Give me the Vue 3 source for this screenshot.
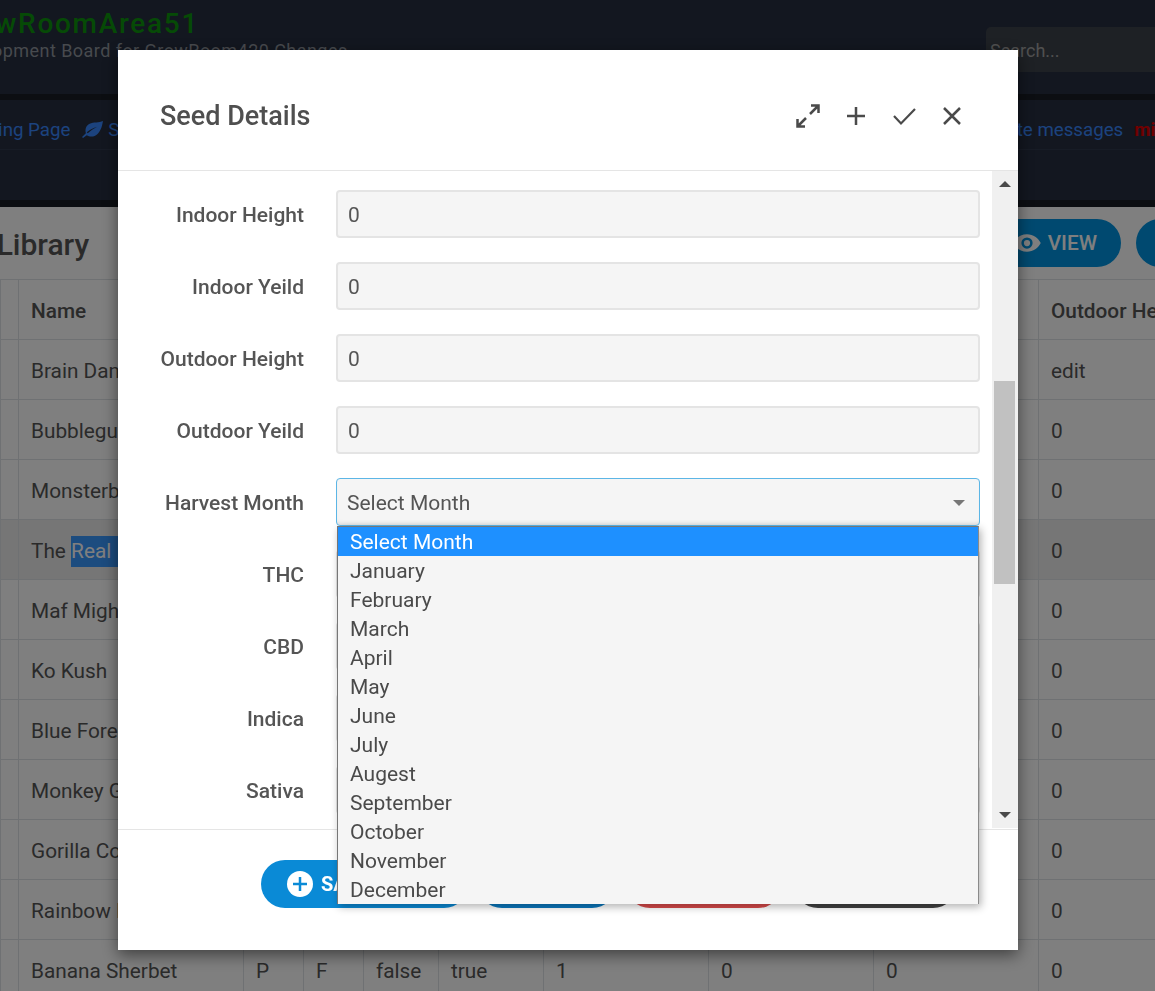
<template>
  <div class="page">
    <header class="topbar">
      <div class="brand">
        <div class="brand-name">GrowRoomArea51</div>
        <div class="brand-sub">Development Board for GrowRoom420 Changes</div>
      </div>
      <div class="search">Search...</div>
    </header>

    <nav class="navbar">
      <div class="nav-row">
        <a class="nav-link landing">Landing Page</a>
        <a class="nav-link">
          <svg class="leaf" viewBox="0 0 24 20">
            <path d="M23 1c-1 7-3 11-6 14-3 3-8 3-11 1l-4 3-1-1 4-4C4 10 5 6 9 4c4-2 10-1 14-3zM7 14c3-3 6-5 10-7-4 1-8 3-11 6z" />
          </svg>
          Seed Library
        </a>
        <span class="nav-spacer"></span>
        <a class="nav-link">Private messages</a>
        <a class="nav-link logout">miguel</a>
      </div>
      <div class="nav-row"></div>
    </nav>

    <section class="content">
      <div class="content-head">
        <h1>Seed Library</h1>
        <div class="head-actions">
          <button class="pill view-pill">
            <svg class="eye" viewBox="0 0 24 24">
              <path d="M12 5C7 5 3 8 1 12c2 4 6 7 11 7s9-3 11-7c-2-4-6-7-11-7zm0 11.500a4.500 4.500 0 1 1 0-9 4.500 4.500 0 0 1 0 9zm0-7a2.500 2.500 0 1 0 0 5 2.500 2.500 0 0 0 0-5z" />
            </svg>
            VIEW
          </button>
          <button class="pill next-pill"></button>
        </div>
      </div>

      <table class="seed-table">
        <colgroup>
          <col class="c-check" />
          <col class="c-name" />
          <col class="c-short" />
          <col class="c-short" />
          <col class="c-bool" />
          <col class="c-mid" />
          <col class="c-num" />
          <col class="c-num" />
          <col class="c-num" />
          <col class="c-last" />
        </colgroup>
        <thead>
          <tr>
            <th></th>
            <th>Name</th>
            <th></th>
            <th></th>
            <th></th>
            <th></th>
            <th></th>
            <th></th>
            <th></th>
            <th>Outdoor Height</th>
          </tr>
        </thead>
        <tbody>
          <tr v-for="(seed, i) in seeds" :key="seed.name" :class="{ hover: i === 3 }">
            <td></td>
            <td v-if="seed.selected">The <span class="selected">Real McCoy</span></td>
            <td v-else>{{ seed.name }}</td>
            <td>P</td>
            <td>F</td>
            <td>false</td>
            <td>true</td>
            <td>1</td>
            <td>0</td>
            <td>0</td>
            <td>{{ seed.last }}</td>
          </tr>
        </tbody>
      </table>
    </section>
  </div>

  <div class="overlay">
    <div class="modal">
      <div class="modal-head">
        <h2>Seed Details</h2>
        <div class="modal-tools">
          <svg viewBox="0 0 24 24" class="tool">
            <path d="M15 1.500h7.500V9M22.500 1.500L14 10M9 22.500H1.500V15M1.500 22.500L10 14" />
          </svg>
          <svg viewBox="0 0 24 24" class="tool">
            <path d="M12 3v18M3 12h18" />
          </svg>
          <svg viewBox="0 0 24 24" class="tool thin">
            <path d="M2 12l7 7.500L23 5" />
          </svg>
          <svg viewBox="0 0 24 24" class="tool">
            <path d="M4 4l16 16M20 4L4 20" />
          </svg>
        </div>
      </div>

      <div class="modal-body">
        <div class="form">
          <div class="form-row" v-for="f in fields" :key="f.label">
            <label>{{ f.label }}</label>
            <div v-if="f.select" class="fake-select">
              <span>Select Month</span>
              <i class="caret"></i>
            </div>
            <input v-else class="field" type="text" value="0" readonly />
          </div>
        </div>
        <div class="scrollbar">
          <i class="arrow up"></i>
          <div class="thumb"></div>
          <i class="arrow down"></i>
        </div>
      </div>

      <div class="modal-foot">
        <button class="btn btn-save">
          <svg class="plus-circle" viewBox="0 0 26 26">
            <circle cx="13" cy="13" r="13" fill="#fff" />
            <path d="M13 6v14M6 13h14" stroke="#0a8ad6" stroke-width="2.500" fill="none" />
          </svg>
          SAVE
        </button>
        <button class="btn btn-blue">EDIT</button>
        <button class="btn btn-red">DELETE</button>
        <button class="btn btn-dark">CLOSE</button>
      </div>

      <ul class="dropdown">
        <li v-for="(m, i) in months" :key="m" :class="{ active: i === 0 }">{{ m }}</li>
      </ul>
    </div>
  </div>
</template>

<script setup>
const seeds = [
  { name: 'Brain Damage', last: 'edit' },
  { name: 'Bubblegum', last: '0' },
  { name: 'Monsterbud', last: '0' },
  { name: 'The Real McCoy', last: '0', selected: true },
  { name: 'Maf Might', last: '0' },
  { name: 'Ko Kush', last: '0' },
  { name: 'Blue Forest', last: '0' },
  { name: 'Monkey Glue', last: '0' },
  { name: 'Gorilla Cookies', last: '0' },
  { name: 'Rainbow Kush', last: '0' },
  { name: 'Banana Sherbet', last: '0' },
]

const fields = [
  { label: 'Indoor Height' },
  { label: 'Indoor Yeild' },
  { label: 'Outdoor Height' },
  { label: 'Outdoor Yeild' },
  { label: 'Harvest Month', select: true },
  { label: 'THC' },
  { label: 'CBD' },
  { label: 'Indica' },
  { label: 'Sativa' },
]

const months = [
  'Select Month',
  'January',
  'February',
  'March',
  'April',
  'May',
  'June',
  'July',
  'Augest',
  'September',
  'October',
  'November',
  'December',
]
</script>

<style>
html,
body {
  margin: 0;
  height: 100%;
  overflow: hidden;
  background: #fff;
}
</style>

<style scoped>
.page {
  width: 1239px;
  font-family: Roboto, 'Liberation Sans', sans-serif;
  color: #555;
  background: #fff;
}

.topbar {
  height: 94px;
  background: #262e40;
  display: flex;
  justify-content: space-between;
  box-sizing: border-box;
  padding-top: 8px;
}

.brand {
  margin-left: -54px;
}

.brand-name {
  font-size: 28px;
  font-weight: 500;
  letter-spacing: 1.7px;
  line-height: 32px;
  color: #0c940c;
}

.brand-sub {
  font-size: 18px;
  line-height: 24px;
  margin-top: -1px;
  letter-spacing: 0.45px;
  color: #8f949c;
}

.search {
  width: 253px;
  height: 45px;
  margin-top: 19px;
  box-sizing: border-box;
  padding: 0 4px;
  line-height: 47px;
  font-size: 18px;
  border-radius: 5px 0 0 5px;
  background: #3c424a;
  color: #a0a0a0;
}

.navbar {
  border-top: 6px solid #181c24;
  border-bottom: 7px solid #181c24;
  background: #262e40;
}

.nav-row {
  height: 50px;
  box-sizing: border-box;
  border-bottom: 1px solid #2f384c;
  display: flex;
  align-items: center;
  padding-top: 10px;
  font-size: 18.700px;
}

.nav-row:last-child {
  border-bottom: 0;
}

.nav-link {
  color: #3887fc;
  display: flex;
  align-items: center;
  gap: 4px;
  white-space: nowrap;
}

.landing {
  margin-left: -43px;
  margin-right: 11px;
}

.leaf {
  width: 23px;
  height: 19px;
  fill: #3887fc;
}

.nav-spacer {
  width: 764px;
}

.logout {
  color: #e00000;
  font-weight: 700;
  margin-left: 11px;
}

.content-head {
  height: 72px;
  display: flex;
  align-items: center;
  justify-content: space-between;
}

h1 {
  margin: 2px 0 0 -78px;
  font-size: 30px;
  font-weight: 500;
  color: #555;
}

.head-actions {
  display: flex;
  gap: 15px;
  margin-top: -1px;
}

.pill {
  height: 48px;
  border: 0;
  border-radius: 24px;
  background: #0093e0;
  color: #fff;
  font: 500 20.800px Roboto, sans-serif;
  display: flex;
  align-items: center;
  gap: 6px;
}

.view-pill {
  width: 140px;
  justify-content: flex-end;
  padding: 0 24px 0 0;
}

.next-pill {
  width: 103px;
  border-radius: 24px 0 0 24px;
}

.eye {
  width: 30px;
  height: 30px;
  fill: #fff;
}

.seed-table {
  width: 1239px;
  table-layout: fixed;
  border-collapse: collapse;
  font-size: 20.800px;
}

.c-check { width: 18px; }
.c-name { width: 225px; }
.c-short { width: 60px; }
.c-bool { width: 75px; }
.c-mid { width: 105px; }
.c-num { width: 165px; }
.c-last { width: 201px; }

th,
td {
  height: 60px;
  padding: 3px 12px 0;
  box-sizing: border-box;
  border: 1px solid #dee2e6;
  text-align: left;
  white-space: nowrap;
  overflow: hidden;
}

th {
  font-weight: 500;
}

tr.hover td {
  background: #ececec;
}

.selected {
  background: #3898ff;
  color: #fff;
  display: inline-block;
  line-height: 31px;
}

.overlay {
  position: fixed;
  inset: 0;
  background: rgba(0, 0, 0, 0.5);
  font-family: Roboto, 'Liberation Sans', sans-serif;
  display: flex;
  justify-content: flex-start;
  align-items: flex-start;
}

.modal {
  position: relative;
  width: 900px;
  height: 900px;
  margin: 50px 0 0 118px;
  background: #fff;
  box-shadow: 0 5px 15px rgba(0, 0, 0, 0.5);
  display: flex;
  flex-direction: column;
  color: #555;
}

.modal-head {
  height: 121px;
  box-sizing: border-box;
  border-bottom: 1px solid #e5e5e5;
  padding: 12px 54px 0 42px;
  display: flex;
  align-items: center;
  justify-content: space-between;
}

h2 {
  margin: 0;
  font-size: 27px;
  font-weight: 500;
  color: #4f4f4f;
}

.modal-tools {
  display: flex;
  gap: 24px;
}

.tool {
  width: 24px;
  height: 24px;
  fill: none;
  stroke: #4a4a4a;
  stroke-width: 2.5;
}

.tool.thin {
  stroke-width: 2.2;
}

.modal-body {
  height: 658px;
  display: flex;
  overflow: hidden;
}

.form {
  flex: 1;
  box-sizing: border-box;
  padding: 19px 12px 0 0;
  display: flex;
  flex-direction: column;
  gap: 24px;
}

.form-row {
  display: grid;
  grid-template-columns: 186px 1fr;
  column-gap: 32px;
  align-items: center;
}

label {
  font-size: 21px;
  font-weight: 500;
  text-align: right;
  color: #555;
  padding-top: 1px;
}

.field,
.fake-select {
  height: 48px;
  width: 100%;
  box-sizing: border-box;
  border: 2px solid #e4e4e4;
  border-radius: 4px;
  background: #f5f5f5;
  padding: 1px 10px 0;
  font: 400 21px Roboto, sans-serif;
  color: #555;
  outline: none;
}

.fake-select {
  border: 1px solid #5cb6e6;
  padding: 1px 10px 0;
  display: flex;
  align-items: center;
  justify-content: space-between;
  box-shadow: inset 0 -4px 5px -3px rgba(0, 0, 0, 0.1);
}

.caret {
  width: 0;
  height: 0;
  border-left: 6px solid transparent;
  border-right: 6px solid transparent;
  border-top: 6px solid #777;
  margin-right: 4px;
}

.scrollbar {
  width: 26px;
  box-sizing: border-box;
  padding-right: 1px;
  background: #f0f0f0;
  display: flex;
  flex-direction: column;
  align-items: center;
  height: 657px;
}

.thumb {
  width: 21px;
  height: 203px;
  margin-top: 194px;
  background: #c1c1c1;
}

.arrow {
  width: 0;
  height: 0;
  border-left: 6px solid transparent;
  border-right: 6px solid transparent;
}

.arrow.up {
  margin-top: 10px;
  border-bottom: 6px solid #4a4a4a;
}

.arrow.down {
  margin-top: auto;
  margin-bottom: 10px;
  border-top: 6px solid #4a4a4a;
}

.modal-foot {
  flex: 1;
  box-sizing: border-box;
  border-top: 1px solid #e5e5e5;
  padding: 30px 0 0 143px;
  display: flex;
  align-items: flex-start;
}

.btn {
  height: 48px;
  border: 0;
  border-radius: 24px;
  color: #fff;
  font: 700 20px Roboto, sans-serif;
  display: flex;
  align-items: center;
  padding: 0 26px;
  gap: 8px;
}

.btn-save {
  width: 207px;
  background: #0a8ad6;
}

.btn-blue {
  width: 138px;
  margin-left: 10px;
  background: #0a78bf;
}

.btn-red {
  width: 156px;
  margin-left: 10px;
  background: #d94a4a;
}

.btn-dark {
  width: 163px;
  margin-left: 12px;
  background: #424242;
}

.plus-circle {
  width: 26px;
  height: 26px;
}

.dropdown {
  position: absolute;
  left: 219px;
  top: 476px;
  width: 642px;
  margin: 0;
  padding: 0;
  box-sizing: border-box;
  list-style: none;
  background: #f5f5f5;
  border: 1px solid #767676;
  border-bottom: 0;
  border-right-color: #8a8a8a;
  box-shadow: 2px 3px 8px rgba(0, 0, 0, 0.3);
  font-size: 21px;
  color: #4a4a4a;
}

.dropdown li {
  height: 29px;
  line-height: 31px;
  padding-left: 12px;
}

.dropdown li.active {
  background: #1e90ff;
  color: #fff;
}
</style>
